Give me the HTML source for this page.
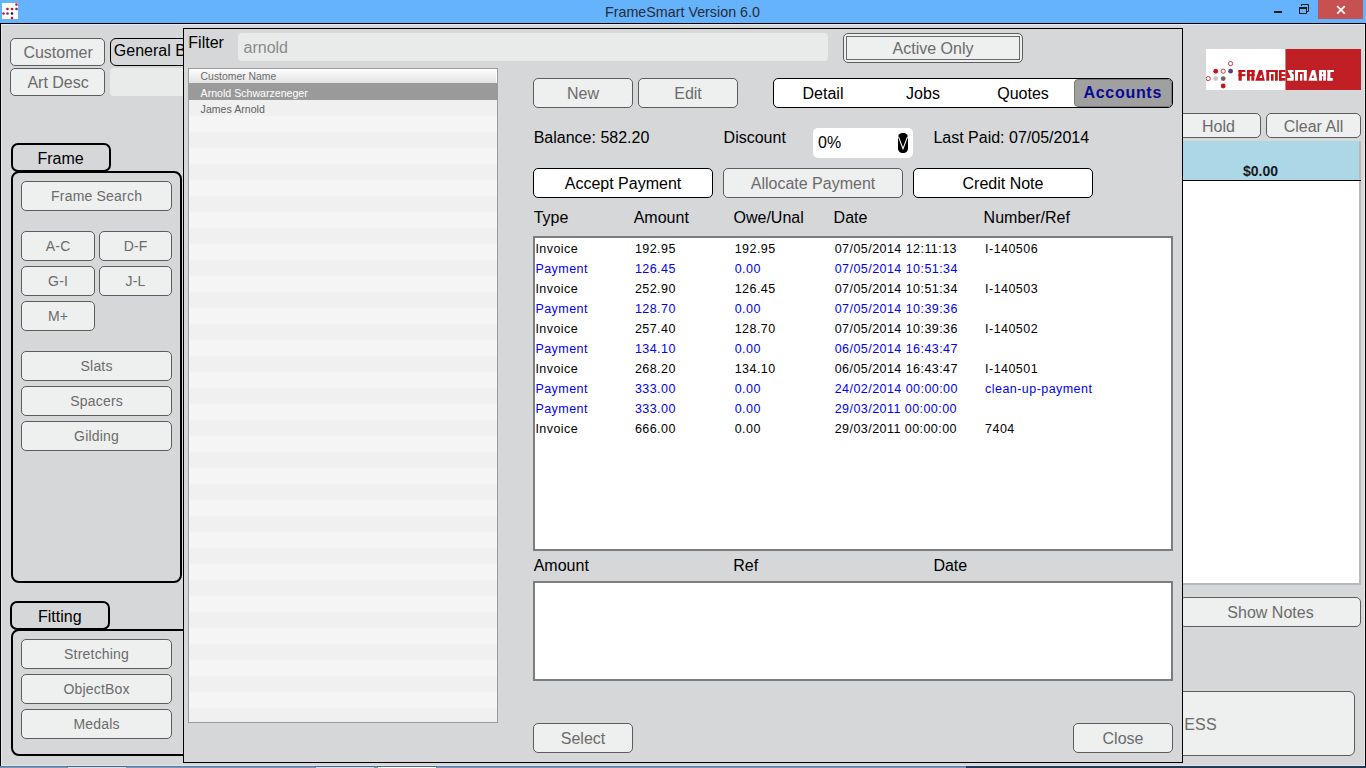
<!DOCTYPE html>
<html><head><meta charset="utf-8">
<style>
*{margin:0;padding:0;box-sizing:border-box}
html,body{width:1366px;height:768px;overflow:hidden;background:#d6d7d9;font-family:"Liberation Sans",sans-serif;position:relative}
.a{position:absolute}
.t{position:absolute;white-space:nowrap;line-height:1}
</style></head><body>
<div class="a" style="left:0px;top:0px;width:1366px;height:23px;background:#65b3fc"></div>
<div class="a" style="left:0px;top:23px;width:1366px;height:1px;background:#000"></div>
<div class="t" style="left:605px;top:5.40px;font-size:14.3px;color:#262b36;">FrameSmart Version 6.0</div>
<svg class="a" style="left:2px;top:3px" width="16" height="16" viewBox="0 0 16 16">
<rect x="0" y="0" width="16" height="16" fill="#fff"/>
<circle cx="14.5" cy="1.5" r="1.3" fill="#d0101a"/>
<circle cx="5.5" cy="6" r="1.3" fill="#d0101a"/><circle cx="10" cy="6" r="1.3" fill="#d0101a"/><circle cx="14.5" cy="6" r="1.3" fill="#5a2a9a"/>
<circle cx="1.5" cy="10.5" r="1.3" fill="#d0101a"/><circle cx="5.5" cy="10.5" r="1.3" fill="#5a3a7a"/><circle cx="10" cy="10.5" r="1.2" fill="#111"/>
<circle cx="10" cy="15" r="1.3" fill="#d0101a"/>
</svg>
<div class="a" style="left:1274px;top:11px;width:8px;height:2px;background:#1a1a1a"></div>
<svg class="a" style="left:1298px;top:3px" width="12" height="12" viewBox="0 0 12 12">
<path d="M3.5 3 V1.5 H10.5 V8.5 H9" fill="none" stroke="#1a1a1a" stroke-width="1"/>
<rect x="1.5" y="4.5" width="7" height="6" fill="none" stroke="#1a1a1a" stroke-width="1"/>
<rect x="1" y="4" width="8" height="2" fill="#1a1a1a"/>
</svg>
<div class="a" style="left:1318px;top:0px;width:45px;height:19px;background:#c75050"></div>
<svg class="a" style="left:1336px;top:5px" width="10" height="10" viewBox="0 0 10 10">
<path d="M1.2 1.2 L8.8 8.6 M8.8 1.2 L1.2 8.6" stroke="#fff" stroke-width="1.8"/>
</svg>
<div class="a" style="left:0px;top:24px;width:1px;height:742px;background:#000"></div>
<div class="a" style="left:10px;top:38px;width:95px;height:28px;background:#eeefef;border:1px solid #5c5c5c;border-radius:5px;"></div>
<div class="t" style="left:10.6px;width:95px;text-align:center;top:45.06px;font-size:16px;color:#6b6b6b;letter-spacing:0px;text-indent:0px">Customer</div>
<div class="a" style="left:10px;top:68px;width:95px;height:28px;background:#eeefef;border:1px solid #5c5c5c;border-radius:5px;"></div>
<div class="t" style="left:10.6px;width:95px;text-align:center;top:74.76px;font-size:16px;color:#6b6b6b;letter-spacing:0px;text-indent:0px">Art Desc</div>
<div class="a" style="left:110px;top:38px;width:120px;height:28px;border:1.5px solid #000;border-radius:6px;background:#d6d7d9"></div>
<div class="t" style="left:113.8px;top:43.36px;font-size:16px;color:#000;">General B</div>
<div class="a" style="left:110px;top:68px;width:91px;height:28px;background:#e9eaea;border-radius:4px"></div>
<div class="a" style="left:11px;top:143px;width:100px;height:29px;border:2px solid #000;border-radius:7px"></div>
<div class="t" style="left:37.5px;top:150.96px;font-size:16px;color:#000;">Frame</div>
<div class="a" style="left:11px;top:171px;width:171px;height:412px;border:2px solid #000;border-radius:8px"></div>
<div class="a" style="left:21px;top:181px;width:151px;height:30px;background:#eeefef;border:1px solid #5c5c5c;border-radius:5px;"></div>
<div class="t" style="left:21px;width:151px;text-align:center;top:189.25px;font-size:14px;color:#6b6b6b;letter-spacing:0.2px;text-indent:0.2px">Frame Search</div>
<div class="a" style="left:21px;top:231px;width:74px;height:30px;background:#eeefef;border:1px solid #5c5c5c;border-radius:5px;"></div>
<div class="t" style="left:21px;width:74px;text-align:center;top:239.25px;font-size:14px;color:#6b6b6b;letter-spacing:0.2px;text-indent:0.2px">A-C</div>
<div class="a" style="left:99px;top:231px;width:73px;height:30px;background:#eeefef;border:1px solid #5c5c5c;border-radius:5px;"></div>
<div class="t" style="left:99px;width:73px;text-align:center;top:239.25px;font-size:14px;color:#6b6b6b;letter-spacing:0.2px;text-indent:0.2px">D-F</div>
<div class="a" style="left:21px;top:266px;width:74px;height:30px;background:#eeefef;border:1px solid #5c5c5c;border-radius:5px;"></div>
<div class="t" style="left:21px;width:74px;text-align:center;top:274.25px;font-size:14px;color:#6b6b6b;letter-spacing:0.2px;text-indent:0.2px">G-I</div>
<div class="a" style="left:99px;top:266px;width:73px;height:30px;background:#eeefef;border:1px solid #5c5c5c;border-radius:5px;"></div>
<div class="t" style="left:99px;width:73px;text-align:center;top:274.25px;font-size:14px;color:#6b6b6b;letter-spacing:0.2px;text-indent:0.2px">J-L</div>
<div class="a" style="left:21px;top:301px;width:74px;height:30px;background:#eeefef;border:1px solid #5c5c5c;border-radius:5px;"></div>
<div class="t" style="left:21px;width:74px;text-align:center;top:309.25px;font-size:14px;color:#6b6b6b;letter-spacing:0.2px;text-indent:0.2px">M+</div>
<div class="a" style="left:21px;top:351px;width:151px;height:30px;background:#eeefef;border:1px solid #5c5c5c;border-radius:5px;"></div>
<div class="t" style="left:21px;width:151px;text-align:center;top:359.25px;font-size:14px;color:#6b6b6b;letter-spacing:0.2px;text-indent:0.2px">Slats</div>
<div class="a" style="left:21px;top:386px;width:151px;height:30px;background:#eeefef;border:1px solid #5c5c5c;border-radius:5px;"></div>
<div class="t" style="left:21px;width:151px;text-align:center;top:394.25px;font-size:14px;color:#6b6b6b;letter-spacing:0.2px;text-indent:0.2px">Spacers</div>
<div class="a" style="left:21px;top:421px;width:151px;height:30px;background:#eeefef;border:1px solid #5c5c5c;border-radius:5px;"></div>
<div class="t" style="left:21px;width:151px;text-align:center;top:429.25px;font-size:14px;color:#6b6b6b;letter-spacing:0.2px;text-indent:0.2px">Gilding</div>
<div class="a" style="left:10px;top:601px;width:100px;height:29px;border:2px solid #000;border-radius:7px"></div>
<div class="t" style="left:38px;top:609.26px;font-size:16px;color:#000;">Fitting</div>
<div class="a" style="left:11px;top:629px;width:300px;height:127px;border:2px solid #000;border-radius:8px"></div>
<div class="a" style="left:21px;top:639px;width:151px;height:30px;background:#eeefef;border:1px solid #5c5c5c;border-radius:5px;"></div>
<div class="t" style="left:21px;width:151px;text-align:center;top:647.25px;font-size:14px;color:#6b6b6b;letter-spacing:0.2px;text-indent:0.2px">Stretching</div>
<div class="a" style="left:21px;top:674px;width:151px;height:30px;background:#eeefef;border:1px solid #5c5c5c;border-radius:5px;"></div>
<div class="t" style="left:21px;width:151px;text-align:center;top:682.25px;font-size:14px;color:#6b6b6b;letter-spacing:0.2px;text-indent:0.2px">ObjectBox</div>
<div class="a" style="left:21px;top:709px;width:151px;height:30px;background:#eeefef;border:1px solid #5c5c5c;border-radius:5px;"></div>
<div class="t" style="left:21px;width:151px;text-align:center;top:717.25px;font-size:14px;color:#6b6b6b;letter-spacing:0.2px;text-indent:0.2px">Medals</div>
<svg class="a" style="left:1206px;top:49px" width="155" height="41" viewBox="0 0 155 41">
<rect x="0" y="0" width="79.5" height="41" fill="#fff"/>
<rect x="79.5" y="0" width="75.5" height="41" fill="#c01f26"/>
<g fill="none" stroke="#d02028" stroke-width="0.9">
<circle cx="24.6" cy="14.6" r="2.1"/><circle cx="17.2" cy="22.2" r="2.1"/><circle cx="2.2" cy="29.6" r="2.1"/>
</g>
<circle cx="9.7" cy="22.2" r="2.4" fill="#c8141e"/>
<circle cx="24.6" cy="22.2" r="2.4" fill="#5a3d8a"/>
<circle cx="9.7" cy="29.6" r="2.4" fill="#c9c5c5"/>
<circle cx="17.2" cy="29.6" r="2.4" fill="#6d6262"/>
<circle cx="17.2" cy="37" r="2.4" fill="#c8141e"/>
<g fill="#c4141c"><rect x="32.5" y="21" width="6.9" height="2"/><rect x="32.5" y="21" width="3.3" height="10.7"/><rect x="32.5" y="25.1" width="6.9" height="2.1"/><rect x="41" y="21" width="7.6" height="2"/><rect x="41" y="21" width="2.8" height="10.7"/><rect x="45.6" y="21" width="3" height="6.2"/><rect x="41" y="25.1" width="7.6" height="2.1"/><rect x="45.3" y="27.2" width="3" height="4.5"/><path d="M49.3 31.7L53 21H56.3L58.8 31.7ZM53.2 29L55.6 25.3L56.3 29Z" fill-rule="evenodd"/><rect x="60.3" y="21" width="11.5" height="2"/><rect x="60.3" y="21" width="2.9" height="10.7"/><rect x="65" y="25.1" width="2.6" height="6.6"/><rect x="69" y="21" width="2.8" height="10.7"/><rect x="73" y="21" width="6.5" height="2"/><rect x="73" y="21" width="2.6" height="10.7"/><rect x="73" y="25.1" width="6.5" height="2.1"/><rect x="73" y="29" width="6.5" height="2.7"/></g>
<g fill="#fff"><rect x="82" y="21" width="5.5" height="2"/><path d="M81.5 21H84L87.5 26V29H85Z"/><rect x="84.7" y="25" width="2.8" height="6"/><rect x="81.2" y="29" width="6.3" height="2.7"/><rect x="89" y="21" width="11.8" height="2"/><rect x="89" y="21" width="3" height="10.7"/><rect x="94" y="25" width="2.3" height="6.7"/><rect x="97.8" y="21" width="3" height="10.7"/><path d="M102.4 31.7L106 21H109L111.5 31.7ZM105.4 29L107.2 25.6L108 29Z" fill-rule="evenodd"/><rect x="113" y="21" width="6.9" height="2"/><rect x="113" y="21" width="3" height="10.7"/><rect x="117.2" y="21" width="2.7" height="6.1"/><rect x="113" y="25.2" width="6.9" height="1.9"/><rect x="117.2" y="27.1" width="2.7" height="4.6"/><rect x="121.4" y="21" width="6.5" height="2"/><rect x="121.4" y="21" width="3" height="10.7"/><rect x="121.4" y="29" width="5.4" height="2.7"/></g>
</svg>
<div class="a" style="left:1176px;top:113px;width:85px;height:25px;background:#eeefef;border:1px solid #5c5c5c;border-radius:5px;"></div>
<div class="t" style="left:1176px;width:85px;text-align:center;top:118.96px;font-size:16px;color:#6b6b6b;letter-spacing:0px;text-indent:0px">Hold</div>
<div class="a" style="left:1266px;top:113px;width:95px;height:25px;background:#eeefef;border:1px solid #5c5c5c;border-radius:5px;"></div>
<div class="t" style="left:1266px;width:95px;text-align:center;top:118.96px;font-size:16px;color:#6b6b6b;letter-spacing:0px;text-indent:0px">Clear All</div>
<div class="a" style="left:1150px;top:141px;width:210px;height:39px;background:#acd7e6"></div>
<div class="a" style="left:1150px;top:181px;width:209px;height:402px;background:#fff"></div>
<div class="a" style="left:1359px;top:141px;width:2px;height:444px;background:#b9b9b9"></div>
<div class="a" style="left:1150px;top:583px;width:209px;height:2px;background:#b9b9b9"></div>
<div class="a" style="left:1150px;top:180px;width:211px;height:1px;background:#000"></div>
<div class="t" style="left:1243px;top:164.45px;font-size:14px;color:#1a1a1a;font-weight:bold">$0.00</div>
<div class="a" style="left:1180px;top:597px;width:181px;height:30px;background:#eeefef;border:1px solid #5c5c5c;border-radius:5px;"></div>
<div class="t" style="left:1180px;width:181px;text-align:center;top:605.06px;font-size:16px;color:#6b6b6b;letter-spacing:0px;text-indent:0px">Show Notes</div>
<div class="a" style="left:1000px;top:691px;width:355px;height:65px;background:#eeefef;border:1px solid #5c5c5c;border-radius:6px"></div>
<div class="t" style="left:1184.2px;top:717.26px;font-size:16px;color:#6b6b6b;letter-spacing:0.2px">ESS</div>
<div class="a" style="left:1365px;top:24px;width:1px;height:742px;background:#000"></div>
<div class="a" style="left:1364px;top:24px;width:1px;height:742px;background:#e8e8e8"></div>
<div class="a" style="left:1px;top:24px;width:1364px;height:1px;background:#e8e8e8"></div>
<div class="a" style="left:1px;top:24px;width:1px;height:742px;background:#e8e8e8"></div>
<div class="a" style="left:1px;top:765px;width:1364px;height:1px;background:#e4e4e4"></div>
<div class="a" style="left:183px;top:28px;width:1000px;height:735px;background:#d6d7d9;border:1px solid #000"></div>
<div class="t" style="left:188.3px;top:35.46px;font-size:16px;color:#000;">Filter</div>
<div class="a" style="left:238px;top:33px;width:590px;height:28px;background:#e9eaea;border-radius:4px"></div>
<div class="t" style="left:243.5px;top:39.66px;font-size:16px;color:#8a8a8a;">arnold</div>
<div class="a" style="left:843px;top:33px;width:180px;height:30px;background:#eeefef;border:1px solid #5c5c5c;border-radius:5px"></div>
<div class="a" style="left:846px;top:36px;width:174px;height:24px;border:1px solid #6a6a6a"></div>
<div class="t" style="left:843px;width:180px;text-align:center;top:41.26px;font-size:16px;color:#6b6b6b">Active Only</div>
<div class="a" style="left:188px;top:68px;width:310px;height:655px;background:#f0f0f0;border:1px solid #9a9a9a"></div>
<div class="a" style="left:189px;top:69px;width:307px;height:14px;background:linear-gradient(#fdfdfd,#e3e3e3)"></div>
<div class="a" style="left:496px;top:69px;width:1px;height:14px;background:#fff"></div>
<div class="a" style="left:189px;top:83px;width:308px;height:17px;background:#9a9a9a"></div>
<div class="a" style="left:189px;top:100px;width:308px;height:16px;background:#f0f0f0"></div>
<div class="a" style="left:189px;top:116px;width:308px;height:16px;background:#f5f5f5"></div>
<div class="a" style="left:189px;top:132px;width:308px;height:16px;background:#f0f0f0"></div>
<div class="a" style="left:189px;top:148px;width:308px;height:16px;background:#f5f5f5"></div>
<div class="a" style="left:189px;top:164px;width:308px;height:16px;background:#f0f0f0"></div>
<div class="a" style="left:189px;top:180px;width:308px;height:16px;background:#f5f5f5"></div>
<div class="a" style="left:189px;top:196px;width:308px;height:16px;background:#f0f0f0"></div>
<div class="a" style="left:189px;top:212px;width:308px;height:16px;background:#f5f5f5"></div>
<div class="a" style="left:189px;top:228px;width:308px;height:16px;background:#f0f0f0"></div>
<div class="a" style="left:189px;top:244px;width:308px;height:16px;background:#f5f5f5"></div>
<div class="a" style="left:189px;top:260px;width:308px;height:16px;background:#f0f0f0"></div>
<div class="a" style="left:189px;top:276px;width:308px;height:16px;background:#f5f5f5"></div>
<div class="a" style="left:189px;top:292px;width:308px;height:16px;background:#f0f0f0"></div>
<div class="a" style="left:189px;top:308px;width:308px;height:16px;background:#f5f5f5"></div>
<div class="a" style="left:189px;top:324px;width:308px;height:16px;background:#f0f0f0"></div>
<div class="a" style="left:189px;top:340px;width:308px;height:16px;background:#f5f5f5"></div>
<div class="a" style="left:189px;top:356px;width:308px;height:16px;background:#f0f0f0"></div>
<div class="a" style="left:189px;top:372px;width:308px;height:16px;background:#f5f5f5"></div>
<div class="a" style="left:189px;top:388px;width:308px;height:16px;background:#f0f0f0"></div>
<div class="a" style="left:189px;top:404px;width:308px;height:16px;background:#f5f5f5"></div>
<div class="a" style="left:189px;top:420px;width:308px;height:16px;background:#f0f0f0"></div>
<div class="a" style="left:189px;top:436px;width:308px;height:16px;background:#f5f5f5"></div>
<div class="a" style="left:189px;top:452px;width:308px;height:16px;background:#f0f0f0"></div>
<div class="a" style="left:189px;top:468px;width:308px;height:16px;background:#f5f5f5"></div>
<div class="a" style="left:189px;top:484px;width:308px;height:16px;background:#f0f0f0"></div>
<div class="a" style="left:189px;top:500px;width:308px;height:16px;background:#f5f5f5"></div>
<div class="a" style="left:189px;top:516px;width:308px;height:16px;background:#f0f0f0"></div>
<div class="a" style="left:189px;top:532px;width:308px;height:16px;background:#f5f5f5"></div>
<div class="a" style="left:189px;top:548px;width:308px;height:16px;background:#f0f0f0"></div>
<div class="a" style="left:189px;top:564px;width:308px;height:16px;background:#f5f5f5"></div>
<div class="a" style="left:189px;top:580px;width:308px;height:16px;background:#f0f0f0"></div>
<div class="a" style="left:189px;top:596px;width:308px;height:16px;background:#f5f5f5"></div>
<div class="a" style="left:189px;top:612px;width:308px;height:16px;background:#f0f0f0"></div>
<div class="a" style="left:189px;top:628px;width:308px;height:16px;background:#f5f5f5"></div>
<div class="a" style="left:189px;top:644px;width:308px;height:16px;background:#f0f0f0"></div>
<div class="a" style="left:189px;top:660px;width:308px;height:16px;background:#f5f5f5"></div>
<div class="a" style="left:189px;top:676px;width:308px;height:16px;background:#f0f0f0"></div>
<div class="a" style="left:189px;top:692px;width:308px;height:16px;background:#f5f5f5"></div>
<div class="a" style="left:189px;top:708px;width:308px;height:14px;background:#f0f0f0"></div>
<div class="t" style="left:200.6px;top:71.70px;font-size:10.4px;color:#6a6a6a;">Customer Name</div>
<div class="t" style="left:200.6px;top:88.33px;font-size:10.6px;color:#ffffff;">Arnold Schwarzeneger</div>
<div class="t" style="left:200.6px;top:103.83px;font-size:10.6px;color:#606060;">James Arnold</div>
<div class="a" style="left:533px;top:78px;width:100px;height:30px;background:#eeefef;border:1px solid #5c5c5c;border-radius:5px;"></div>
<div class="t" style="left:533px;width:100px;text-align:center;top:86.26px;font-size:16px;color:#6b6b6b;letter-spacing:0px;text-indent:0px">New</div>
<div class="a" style="left:638px;top:78px;width:100px;height:30px;background:#eeefef;border:1px solid #5c5c5c;border-radius:5px;"></div>
<div class="t" style="left:638px;width:100px;text-align:center;top:86.26px;font-size:16px;color:#6b6b6b;letter-spacing:0px;text-indent:0px">Edit</div>
<div class="a" style="left:773px;top:78px;width:400px;height:30px;background:#fff;border:1px solid #000;border-radius:5px"></div>
<div class="a" style="left:1074px;top:79px;width:98px;height:28px;background:#a0a0a0;border-radius:4px;border:1px solid #7a7a7a"></div>
<div class="t" style="left:773px;width:100px;text-align:center;top:86.26px;font-size:16px;color:#000">Detail</div>
<div class="t" style="left:873px;width:100px;text-align:center;top:86.26px;font-size:16px;color:#000">Jobs</div>
<div class="t" style="left:973px;width:100px;text-align:center;top:86.26px;font-size:16px;color:#000">Quotes</div>
<div class="t" style="left:1073px;width:100px;text-align:center;top:84.86px;font-size:16px;color:#0a0a96;font-weight:bold;letter-spacing:0.7px;text-indent:-0.5px">Accounts</div>
<div class="t" style="left:533.7px;top:130.26px;font-size:16px;color:#000;">Balance: 582.20</div>
<div class="t" style="left:723.6px;top:130.26px;font-size:16px;color:#000;">Discount</div>
<div class="a" style="left:813px;top:128px;width:100px;height:30px;background:#fff;border-radius:5px"></div>
<div class="t" style="left:818px;top:135.26px;font-size:16px;color:#000;">0%</div>
<div class="a" style="left:898px;top:133px;width:10px;height:20px;background:#000;border-radius:4.5px"></div>
<svg class="a" style="left:898px;top:133px" width="10" height="20" viewBox="0 0 10 20"><path d="M0.4 3.6 L5 15.6 L9.6 3.6" fill="none" stroke="#fff" stroke-width="1.1"/></svg>
<div class="t" style="left:933.4px;top:130.26px;font-size:16px;color:#000;">Last Paid: 07/05/2014</div>
<div class="a" style="left:533px;top:168px;width:180px;height:30px;background:#fff;border:1px solid #000;border-radius:5px;"></div>
<div class="t" style="left:533px;width:180px;text-align:center;top:176.26px;font-size:16px;color:#000;letter-spacing:0px;text-indent:0px">Accept Payment</div>
<div class="a" style="left:723px;top:168px;width:180px;height:30px;background:#eeefef;border:1px solid #5c5c5c;border-radius:5px;"></div>
<div class="t" style="left:723px;width:180px;text-align:center;top:176.26px;font-size:16px;color:#6b6b6b;letter-spacing:0px;text-indent:0px">Allocate Payment</div>
<div class="a" style="left:913px;top:168px;width:180px;height:30px;background:#fff;border:1px solid #000;border-radius:5px;"></div>
<div class="t" style="left:913px;width:180px;text-align:center;top:176.26px;font-size:16px;color:#000;letter-spacing:0px;text-indent:0px">Credit Note</div>
<div class="t" style="left:533.7px;top:210.26px;font-size:16px;color:#000;">Type</div>
<div class="t" style="left:633.7px;top:210.26px;font-size:16px;color:#000;">Amount</div>
<div class="t" style="left:733.5px;top:210.26px;font-size:16px;color:#000;">Owe/Unal</div>
<div class="t" style="left:833.6px;top:210.26px;font-size:16px;color:#000;">Date</div>
<div class="t" style="left:983.6px;top:210.26px;font-size:16px;color:#000;">Number/Ref</div>
<div class="a" style="left:533px;top:236px;width:640px;height:315px;background:#fff;border:2px solid #7d7d7d"></div>
<div class="t" style="left:535.4000000000001px;top:243.42px;font-size:12.5px;color:#000;letter-spacing:0.45px">Invoice</div>
<div class="t" style="left:634.9000000000001px;top:243.42px;font-size:12.5px;color:#000;letter-spacing:0.45px">192.95</div>
<div class="t" style="left:734.7px;top:243.42px;font-size:12.5px;color:#000;letter-spacing:0.45px">192.95</div>
<div class="t" style="left:834.7px;top:243.42px;font-size:12.5px;color:#000;letter-spacing:0.45px">07/05/2014 12:11:13</div>
<div class="t" style="left:985.1px;top:243.42px;font-size:12.5px;color:#000;letter-spacing:0.45px">I-140506</div>
<div class="t" style="left:535.4000000000001px;top:263.42px;font-size:12.5px;color:#0000f4;letter-spacing:0.45px">Payment</div>
<div class="t" style="left:634.9000000000001px;top:263.42px;font-size:12.5px;color:#0000f4;letter-spacing:0.45px">126.45</div>
<div class="t" style="left:734.7px;top:263.42px;font-size:12.5px;color:#0000f4;letter-spacing:0.45px">0.00</div>
<div class="t" style="left:834.7px;top:263.42px;font-size:12.5px;color:#0000f4;letter-spacing:0.45px">07/05/2014 10:51:34</div>
<div class="t" style="left:535.4000000000001px;top:283.42px;font-size:12.5px;color:#000;letter-spacing:0.45px">Invoice</div>
<div class="t" style="left:634.9000000000001px;top:283.42px;font-size:12.5px;color:#000;letter-spacing:0.45px">252.90</div>
<div class="t" style="left:734.7px;top:283.42px;font-size:12.5px;color:#000;letter-spacing:0.45px">126.45</div>
<div class="t" style="left:834.7px;top:283.42px;font-size:12.5px;color:#000;letter-spacing:0.45px">07/05/2014 10:51:34</div>
<div class="t" style="left:985.1px;top:283.42px;font-size:12.5px;color:#000;letter-spacing:0.45px">I-140503</div>
<div class="t" style="left:535.4000000000001px;top:303.42px;font-size:12.5px;color:#0000f4;letter-spacing:0.45px">Payment</div>
<div class="t" style="left:634.9000000000001px;top:303.42px;font-size:12.5px;color:#0000f4;letter-spacing:0.45px">128.70</div>
<div class="t" style="left:734.7px;top:303.42px;font-size:12.5px;color:#0000f4;letter-spacing:0.45px">0.00</div>
<div class="t" style="left:834.7px;top:303.42px;font-size:12.5px;color:#0000f4;letter-spacing:0.45px">07/05/2014 10:39:36</div>
<div class="t" style="left:535.4000000000001px;top:323.42px;font-size:12.5px;color:#000;letter-spacing:0.45px">Invoice</div>
<div class="t" style="left:634.9000000000001px;top:323.42px;font-size:12.5px;color:#000;letter-spacing:0.45px">257.40</div>
<div class="t" style="left:734.7px;top:323.42px;font-size:12.5px;color:#000;letter-spacing:0.45px">128.70</div>
<div class="t" style="left:834.7px;top:323.42px;font-size:12.5px;color:#000;letter-spacing:0.45px">07/05/2014 10:39:36</div>
<div class="t" style="left:985.1px;top:323.42px;font-size:12.5px;color:#000;letter-spacing:0.45px">I-140502</div>
<div class="t" style="left:535.4000000000001px;top:343.42px;font-size:12.5px;color:#0000f4;letter-spacing:0.45px">Payment</div>
<div class="t" style="left:634.9000000000001px;top:343.42px;font-size:12.5px;color:#0000f4;letter-spacing:0.45px">134.10</div>
<div class="t" style="left:734.7px;top:343.42px;font-size:12.5px;color:#0000f4;letter-spacing:0.45px">0.00</div>
<div class="t" style="left:834.7px;top:343.42px;font-size:12.5px;color:#0000f4;letter-spacing:0.45px">06/05/2014 16:43:47</div>
<div class="t" style="left:535.4000000000001px;top:363.42px;font-size:12.5px;color:#000;letter-spacing:0.45px">Invoice</div>
<div class="t" style="left:634.9000000000001px;top:363.42px;font-size:12.5px;color:#000;letter-spacing:0.45px">268.20</div>
<div class="t" style="left:734.7px;top:363.42px;font-size:12.5px;color:#000;letter-spacing:0.45px">134.10</div>
<div class="t" style="left:834.7px;top:363.42px;font-size:12.5px;color:#000;letter-spacing:0.45px">06/05/2014 16:43:47</div>
<div class="t" style="left:985.1px;top:363.42px;font-size:12.5px;color:#000;letter-spacing:0.45px">I-140501</div>
<div class="t" style="left:535.4000000000001px;top:383.42px;font-size:12.5px;color:#0000f4;letter-spacing:0.45px">Payment</div>
<div class="t" style="left:634.9000000000001px;top:383.42px;font-size:12.5px;color:#0000f4;letter-spacing:0.45px">333.00</div>
<div class="t" style="left:734.7px;top:383.42px;font-size:12.5px;color:#0000f4;letter-spacing:0.45px">0.00</div>
<div class="t" style="left:834.7px;top:383.42px;font-size:12.5px;color:#0000f4;letter-spacing:0.45px">24/02/2014 00:00:00</div>
<div class="t" style="left:985.1px;top:383.42px;font-size:12.5px;color:#0000f4;letter-spacing:0.45px">clean-up-payment</div>
<div class="t" style="left:535.4000000000001px;top:403.42px;font-size:12.5px;color:#0000f4;letter-spacing:0.45px">Payment</div>
<div class="t" style="left:634.9000000000001px;top:403.42px;font-size:12.5px;color:#0000f4;letter-spacing:0.45px">333.00</div>
<div class="t" style="left:734.7px;top:403.42px;font-size:12.5px;color:#0000f4;letter-spacing:0.45px">0.00</div>
<div class="t" style="left:834.7px;top:403.42px;font-size:12.5px;color:#0000f4;letter-spacing:0.45px">29/03/2011 00:00:00</div>
<div class="t" style="left:535.4000000000001px;top:423.42px;font-size:12.5px;color:#000;letter-spacing:0.45px">Invoice</div>
<div class="t" style="left:634.9000000000001px;top:423.42px;font-size:12.5px;color:#000;letter-spacing:0.45px">666.00</div>
<div class="t" style="left:734.7px;top:423.42px;font-size:12.5px;color:#000;letter-spacing:0.45px">0.00</div>
<div class="t" style="left:834.7px;top:423.42px;font-size:12.5px;color:#000;letter-spacing:0.45px">29/03/2011 00:00:00</div>
<div class="t" style="left:985.1px;top:423.42px;font-size:12.5px;color:#000;letter-spacing:0.45px">7404</div>
<div class="t" style="left:533.7px;top:557.66px;font-size:16px;color:#000;">Amount</div>
<div class="t" style="left:733.3px;top:557.66px;font-size:16px;color:#000;">Ref</div>
<div class="t" style="left:933.4px;top:557.66px;font-size:16px;color:#000;">Date</div>
<div class="a" style="left:533px;top:581px;width:640px;height:100px;background:#fff;border:2px solid #7d7d7d"></div>
<div class="a" style="left:533px;top:723px;width:100px;height:30px;background:#eeefef;border:1px solid #5c5c5c;border-radius:5px;"></div>
<div class="t" style="left:533px;width:100px;text-align:center;top:731.26px;font-size:16px;color:#6b6b6b;letter-spacing:0px;text-indent:0px">Select</div>
<div class="a" style="left:1073px;top:723px;width:100px;height:30px;background:#eeefef;border:1px solid #5c5c5c;border-radius:5px;"></div>
<div class="t" style="left:1073px;width:100px;text-align:center;top:731.26px;font-size:16px;color:#6b6b6b;letter-spacing:0px;text-indent:0px">Close</div>
<div class="a" style="left:0px;top:766px;width:966px;height:1px;background:#5d7fa3"></div>
<div class="a" style="left:0px;top:767px;width:966px;height:1px;background:#7797ba"></div>
<div class="a" style="left:966px;top:766px;width:400px;height:2px;background:#1f3b57"></div>
<div class="a" style="left:67px;top:766px;width:60px;height:1px;background:#46648a"></div>
<div class="a" style="left:68px;top:767px;width:58px;height:1px;background:#d5e0eb"></div>
<div class="a" style="left:315px;top:766px;width:60px;height:1px;background:#46648a"></div>
<div class="a" style="left:316px;top:767px;width:58px;height:1px;background:#d5e0eb"></div>
<div class="a" style="left:377px;top:766px;width:60px;height:1px;background:#46648a"></div>
<div class="a" style="left:378px;top:767px;width:58px;height:1px;background:#ffffff"></div>
</body></html>
